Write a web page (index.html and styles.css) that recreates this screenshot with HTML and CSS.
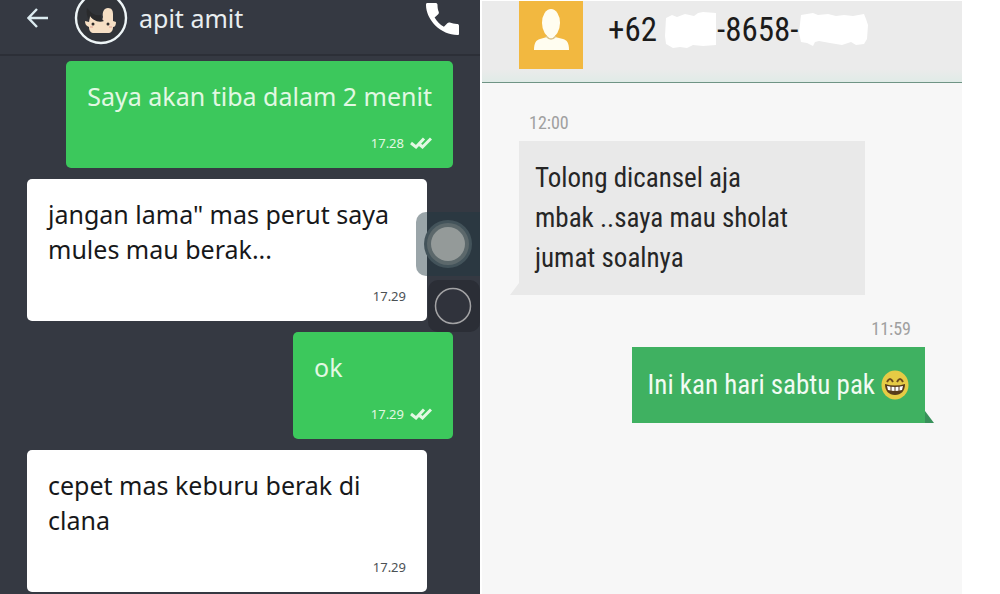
FILE: index.html
```html
<!DOCTYPE html>
<html lang="id">
<head>
    <meta charset="UTF-8">
    <meta name="viewport" content="width=device-width, initial-scale=1.0">
    <title>Chat</title>
    <link rel="stylesheet" href="styles.css">
</head>
<body>
    <div class="screens">
        <section class="driver-chat">
            <header class="driver-header">
                <button class="icon-button" aria-label="Kembali">
                    <svg width="22" height="20" viewBox="0 0 22 20" fill="none" stroke="#dcebf0" stroke-width="2.4">
                        <path d="M21 10H2M10 1L1.5 10L10 19"/>
                    </svg>
                </button>
                <svg class="driver-avatar" width="54" height="54" viewBox="0 0 54 54">
                    <circle cx="27" cy="27" r="25" fill="#313439" stroke="#eef5f7" stroke-width="2.4"/>
                    <path d="M16 25c2 3 6 5 12 5l1-4c-1-5 1-9 5-9s5 3 5 6v7l3 1c0 3-1 5-3 5 0 4-2 6-5 6H20c-3 0-5-2-5-6-3-1-4-3-4-6l4 1z" fill="#f6dfc4"/>
                    <path d="M13 17l3 3c2 3 6 5 11 4 0 3 1 5 3 6-6 2-12-1-14-6l-1 5c-2-3-3-8-2-12z" fill="#292a2c"/>
                    <circle cx="19" cy="33" r="1.5" fill="#2f2b2a"/>
                    <circle cx="34" cy="33" r="1.5" fill="#2f2b2a"/>
                    <path d="M16 36h3M35 36h3" stroke="#eab7a4" stroke-width="1.5"/>
                </svg>
                <h1 class="driver-name">apit amit</h1>
                <button class="icon-button" aria-label="Telepon">
                    <svg width="34" height="34" viewBox="0 0 34 34" fill="#fff">
                        <path d="M1 2h9c1 0 1.500 1 1.500 2 0 3 .5 5 1.300 7 .2 1 0 1.500-.6 2.200l-3.600 3.300c2.300 4 5.200 7 9.300 9.200l3.700-3.600c.7-.7 1.300-.8 2.200-.5 2.300.8 4.500 1.200 7.200 1.300 1.300 0 2 .6 2 1.800V33c0 .8-.5 1-1.500 1C15 34 0 19 0 4c0-1 .2-2 1-2z"/>
                    </svg>
                </button>
            </header>
            <main class="driver-messages">
                <article class="message message-out">
                    <p class="message-text">Saya akan tiba dalam 2 menit</p>
                    <div class="message-meta">
                        <time>17.28</time>
                        <svg width="22" height="12" viewBox="0 0 22 12" fill="none" stroke="#e2f8e3" stroke-width="3">
                            <path d="M1 6l5 4L14 1.500M9 7l3.500 3L21 1.500"/>
                        </svg>
                    </div>
                </article>
                <article class="message message-in">
                    <p class="message-text">jangan lama" mas perut saya mules mau berak...</p>
                    <div class="message-meta"><time>17.29</time></div>
                </article>
                <article class="message message-out">
                    <p class="message-text">ok</p>
                    <div class="message-meta">
                        <time>17.29</time>
                        <svg width="22" height="12" viewBox="0 0 22 12" fill="none" stroke="#e2f8e3" stroke-width="3">
                            <path d="M1 6l5 4L14 1.500M9 7l3.500 3L21 1.500"/>
                        </svg>
                    </div>
                </article>
                <article class="message message-in">
                    <p class="message-text">cepet mas keburu berak di clana</p>
                    <div class="message-meta"><time>17.29</time></div>
                </article>
            </main>
            <div class="floating-controls">
                <button class="assist-button" aria-label="Menu bantuan">
                    <svg width="64" height="64" viewBox="0 0 64 64">
                        <circle cx="32" cy="32" r="24" fill="#43535a"/>
                        <circle cx="32" cy="32" r="21" fill="#5c686b"/>
                        <circle cx="32" cy="32" r="17" fill="#949a99"/>
                    </svg>
                </button>
                <button class="record-button" aria-label="Rekam">
                    <svg width="52" height="52" viewBox="0 0 52 52">
                        <circle cx="25" cy="26" r="17.500" fill="#30333c" stroke="#a3a3a5" stroke-width="1.500"/>
                    </svg>
                </button>
            </div>
        </section>

        <section class="sms-chat">
            <header class="sms-header">
                <svg class="contact-photo" width="64" height="68" viewBox="0 0 64 68">
                    <rect width="64" height="68" fill="#f2b840"/>
                    <ellipse cx="32" cy="22" rx="9" ry="14" fill="#fffdf0"/>
                    <path d="M28 33h8v3l8 2c4 1 6 4 6 11H15c0-7 2-10 6-11l7-2z" fill="#fffdf0"/>
                    <path d="M27 35q5 6 10 0" fill="none" stroke="#dcc48a" stroke-width="1.500"/>
                </svg>
                <h2 class="phone-number">
                    <span>+62</span>
                    <svg width="52" height="38" viewBox="0 0 52 38" fill="#fff">
                        <path d="M1 7l6-3 5 2 8-3 9 2 4-3 5-1 13 1v32l-13 1-10-1-6 3-7-1-7 1-7-4-1-8z"/>
                    </svg>
                    <span>-8658-</span>
                    <svg width="69" height="38" viewBox="0 0 69 38" fill="#fff">
                        <path d="M2 4l12-2 5 2 10-1 8 2 8-1 9 1 11-2 2 5 2 6-1 14-3 5-8 1-5-3-9 3-12-2-11-2-4 1-2 4-6-3-6-1-2-9 1-9z"/>
                    </svg>
                </h2>
            </header>
            <main class="sms-messages">
                <article class="sms sms-in">
                    <time>12:00</time>
                    <p class="sms-text">Tolong dicansel aja<br>mbak ..saya mau sholat<br>jumat soalnya</p>
                </article>
                <article class="sms sms-out">
                    <time>11:59</time>
                    <p class="sms-text">
                        Ini kan hari sabtu pak
                        <svg width="28" height="30" viewBox="0 0 28 30" role="img" aria-label="Tertawa">
                            <ellipse cx="14" cy="15" rx="13.500" ry="14.500" fill="#e6cb45"/>
                            <path d="M6 12q3-6 6 0M16 12q3-6 6 0" fill="none" stroke="#6b4a1c" stroke-width="2"/>
                            <path d="M4 14q10 3 20 0c0 7-4 11-10 11S4 21 4 14z" fill="#563a1b"/>
                            <path d="M6 16q8 2 16 0l-1 4q-7 2-14 0z" fill="#fff"/>
                            <path d="M10 16v5M14 17v5M18 16v5" stroke="#563a1b"/>
                        </svg>
                    </p>
                </article>
            </main>
        </section>
    </div>
</body>
</html>
```
FILE: styles.css
```css
* {
    margin: 0;
    padding: 0;
    box-sizing: border-box;
}

body {
    background-color: #fff;
    font-family: "Noto Sans", sans-serif;
}

button {
    border: none;
    background: none;
    cursor: pointer;
}

svg {
    display: block;
    flex-shrink: 0;
}

.screens {
    display: grid;
    grid-template-columns: 48% 48%;
    gap: 2px;
    min-height: 100vh;
}

/* Driver chat */
.driver-chat {
    position: relative;
    background-color: #353942;
}

.driver-header {
    display: flex;
    align-items: center;
    height: 56px;
    padding: 0 20px 18px 27px;
    border-bottom: 2px solid #2c2f37;
}

.driver-avatar {
    margin-left: 25px;
}

.driver-name {
    flex: 1;
    margin-left: 11px;
    color: #e9eef0;
    font-size: 25px;
    font-weight: 400;
    line-height: 36px;
}

.driver-messages {
    display: flex;
    flex-direction: column;
    gap: 11px;
    padding: 5px 27px 1px;
}

.message {
    min-width: 160px;
    max-width: 400px;
    padding: 18px 21px 15px;
    border-radius: 5px;
}

.message-out {
    align-self: flex-end;
    background-color: #3cc85c;
    color: #e2f8e3;
}

.message-in {
    width: 100%;
    align-self: flex-start;
    background-color: #fff;
    color: #17181a;
}

.message-text {
    font-size: 25px;
    line-height: 35px;
}

.message-meta {
    display: flex;
    justify-content: flex-end;
    align-items: center;
    gap: 6px;
    margin-top: 19px;
    font-size: 13px;
    line-height: 20px;
}

.message-in .message-meta {
    color: #4b5154;
}

/* Buttons floating over the conversation */
.floating-controls {
    position: absolute;
    top: 212px;
    right: 0;
    display: flex;
    flex-direction: column;
    align-items: flex-end;
    gap: 4px;
}

.assist-button {
    border-radius: 10px 0 0 10px;
    background-color: rgba(31, 55, 65, 0.45);
}

.record-button {
    border-radius: 10px;
    background-color: #2b2e36;
}

/* SMS chat */
.sms-chat {
    margin-top: 1px;
    background-color: #f7f7f7;
    font-family: "Roboto Condensed", "Liberation Sans Narrow", Roboto, sans-serif;
}

.sms-header {
    display: flex;
    align-items: flex-start;
    gap: 25px;
    height: 82px;
    padding-left: 37px;
    border-bottom: 1px solid #6f9485;
    background: linear-gradient(#ebebeb 84%, #e0ebe7);
}

.phone-number {
    display: flex;
    align-items: center;
    padding-top: 9px;
    color: #1b1b1b;
    font-size: 33px;
    font-weight: 400;
    line-height: 40px;
}

.phone-number span:first-child {
    margin-right: 8px;
}

.sms-messages {
    display: flex;
    flex-direction: column;
    gap: 22px;
    padding: 28px 37px;
}

.sms {
    display: flex;
    flex-direction: column;
}

.sms time {
    margin: 0 10px 6px;
    color: #a0a0a0;
    font-size: 18px;
    line-height: 24px;
}

.sms-text {
    position: relative;
    font-size: 27px;
    line-height: 40px;
}

.sms-text::after {
    content: "";
    position: absolute;
    bottom: 0;
    width: 9px;
    height: 12px;
}

.sms-in {
    align-items: flex-start;
}

.sms-in .sms-text {
    width: 346px;
    max-width: 100%;
    padding: 17px 16px;
    background-color: #e9e9e9;
    color: #262626;
}

.sms-in .sms-text::after {
    right: 100%;
    background-color: #e9e9e9;
    clip-path: polygon(100% 0, 100% 100%, 0 100%);
}

.sms-out {
    align-items: flex-end;
}

.sms-out time {
    margin-right: 14px;
}

.sms-out .sms-text {
    display: flex;
    align-items: center;
    gap: 6px;
    padding: 18px 16px;
    background-color: #3fb161;
    color: #f1fbf3;
}

.sms-out .sms-text::after {
    left: 100%;
    background-color: #38915a;
    clip-path: polygon(0 0, 100% 100%, 0 100%);
}
```
